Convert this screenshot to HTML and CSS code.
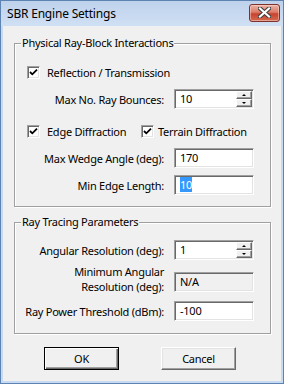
FILE: index.html
```html
<!DOCTYPE html>
<html>
<head>
  <meta name="viewport" content="width=device-width, initial-scale=1">
  <link rel="stylesheet" href="styles.css">
</head>
<body>

  <div class="window">
    <div class="titlebar">
      <span class="title">SBR Engine Settings</span>
      <span class="closeBtn">
        <svg width="13" height="11" viewBox="0 0 13 11">
          <path d="M2 1.5 L11 9.5 M11 1.5 L2 9.5" stroke="#3c3c3c" stroke-width="4.2" stroke-linecap="square" fill="none"/>
          <path d="M2 1.5 L11 9.5 M11 1.5 L2 9.5" stroke="#ffffff" stroke-width="2.2" stroke-linecap="square" fill="none"/>
        </svg>
      </span>
    </div>

    <div class="client">
      <fieldset class="group groupPhys">
        <legend>Physical Ray-Block Interactions</legend>

        <div class="checkRow rowRefl">
          <label class="check"><span class="box"><svg width="9" height="9" viewBox="0 0 9 9"><path d="M1 4 L3.3 6.3 L8 1.6" stroke="#000" stroke-width="1.8" fill="none"/></svg></span>Reflection / Transmission</label>
        </div>

        <div class="fieldRow rowBounces">
          <span class="lbl">Max No. Ray Bounces:</span>
          <div class="edit">
            <span class="val">10</span>
            <span class="spinner">
              <span class="spinBtn"><i class="arrowUp"></i></span>
              <span class="spinBtn"><i class="arrowDown"></i></span>
            </span>
          </div>
        </div>

        <div class="checkRow rowDiff">
          <label class="check checkEdge"><span class="box"><svg width="9" height="9" viewBox="0 0 9 9"><path d="M1 4 L3.3 6.3 L8 1.6" stroke="#000" stroke-width="1.8" fill="none"/></svg></span>Edge Diffraction</label>
          <label class="check checkTerrain"><span class="box"><svg width="9" height="9" viewBox="0 0 9 9"><path d="M1 4 L3.3 6.3 L8 1.6" stroke="#000" stroke-width="1.8" fill="none"/></svg></span>Terrain Diffraction</label>
        </div>

        <div class="fieldRow rowWedge">
          <span class="lbl">Max Wedge Angle (deg):</span>
          <div class="edit"><span class="val">170</span></div>
        </div>

        <div class="fieldRow rowEdgeLen">
          <span class="lbl">Min Edge Length:</span>
          <div class="edit"><span class="val"><span class="selected">10</span></span></div>
        </div>
      </fieldset>

      <fieldset class="group groupRay">
        <legend>Ray Tracing Parameters</legend>

        <div class="fieldRow rowAngular">
          <span class="lbl">Angular Resolution (deg):</span>
          <div class="edit">
            <span class="val">1</span>
            <span class="spinner">
              <span class="spinBtn"><i class="arrowUp"></i></span>
              <span class="spinBtn"><i class="arrowDown"></i></span>
            </span>
          </div>
        </div>

        <div class="fieldRow rowMinAng">
          <span class="lbl lblTwoLine">Minimum Angular<br>Resolution (deg):</span>
          <div class="edit disabled"><span class="val">N/A</span></div>
        </div>

        <div class="fieldRow rowPower">
          <span class="lbl">Ray Power Threshold (dBm):</span>
          <div class="edit"><span class="val">-100</span></div>
        </div>
      </fieldset>

      <div class="buttonRow">
        <button class="winButton defaultButton" type="button">OK</button>
        <button class="winButton" type="button">Cancel</button>
      </div>
    </div>
  </div>

</body>
</html>
```

FILE: styles.css
```css
html {
  background-color: #f0f0f0;
}

body {
  margin: 0;
  font-family: "Segoe UI", "Noto Sans", "Open Sans", sans-serif;
  font-size: 11px;
  letter-spacing: -0.25px;
  color: #000;
}

.window {
  width: 284px;
  height: 384px;
  box-sizing: border-box;
  border: 1px solid #5d83b3;
  padding: 0 2px 2px 2px;
  background: #c8daf1;
  display: flex;
  flex-direction: column;
}

.titlebar {
  flex-shrink: 0;
  height: 25px;
  display: flex;
  align-items: center;
  justify-content: space-between;
  background: linear-gradient(#bed2ec, #d0e0f4);
  margin: 0 -2px;
  padding: 0 3px 0 6px;
}

.title {
  font-size: 12px;
  letter-spacing: -0.2px;
}

.closeBtn {
  width: 31px;
  height: 18px;
  box-sizing: border-box;
  border: 1px solid #7b332b;
  border-radius: 3px;
  background: linear-gradient(#eab3a6 0%, #dc7c68 45%, #c9432f 55%, #d36a4f 100%);
  box-shadow: inset 0 0 0 1px rgba(255, 220, 210, 0.5);
  display: flex;
  align-items: center;
  justify-content: center;
  margin-top: -2px;
}

.client {
  flex: 1;
  min-height: 0;
  background: #f0f0f0;
  padding: 0 10px 0 11px;
}

/* group boxes */
.group {
  margin: 0;
  padding: 0;
  border: 1px solid #a0a0a0;
  box-shadow: inset 1px 1px 0 #fff, 1px 1px 0 #fff;
  width: 257px;
  box-sizing: border-box;
  min-inline-size: 0;
}

.group legend {
  padding: 0 1px;
  margin-left: 6px;
  line-height: 16px;
  background: #f0f0f0;
}

.groupPhys {
  margin-top: 9px;
  padding-top: 14px;
  padding-bottom: 11px;
}

.groupRay {
  margin-top: 7px;
  padding-top: 10px;
  padding-bottom: 12px;
}

/* check boxes */
.checkRow {
  height: 14px;
  display: flex;
  align-items: center;
  padding-left: 12px;
}

.check {
  display: flex;
  align-items: center;
}

.box {
  width: 13px;
  height: 13px;
  box-sizing: border-box;
  background: #fff;
  border-top: 1px solid #a0a0a0;
  border-left: 1px solid #a0a0a0;
  border-bottom: 1px solid #fff;
  border-right: 1px solid #fff;
  box-shadow: inset 1px 1px 0 #696969, inset -1px -1px 0 #e3e3e3;
  display: flex;
  align-items: center;
  justify-content: center;
  margin-right: 7px;
}

.checkEdge {
  width: 114px;
}

.checkTerrain .box {
  margin-right: 4px;
}

/* label + edit rows */
.fieldRow {
  display: flex;
  align-items: center;
}

.lbl {
  width: 149px;
  text-align: right;
  margin-right: 10px;
}

.lblTwoLine {
  line-height: 15px;
  margin-bottom: -2px;
}

.edit {
  position: relative;
  width: 80px;
  height: 20px;
  box-sizing: border-box;
  background: #fff;
  border-top: 1px solid #a0a0a0;
  border-left: 1px solid #a0a0a0;
  border-bottom: 1px solid #fff;
  border-right: 1px solid #fff;
  box-shadow: inset 1px 1px 0 #696969, inset -1px -1px 0 #e3e3e3;
  display: flex;
  align-items: center;
  padding-left: 5px;
}

.edit.disabled {
  background: #f0f0f0;
}

.val {
  line-height: 14px;
}

.selected {
  background: #3399ff;
  color: #fff;
}

.spinner {
  position: absolute;
  right: 1px;
  top: 1px;
  width: 16px;
  height: 16px;
  display: flex;
  flex-direction: column;
}

.spinBtn {
  flex: 1;
  box-sizing: border-box;
  background: #f0f0f0;
  border-top: 1px solid #fff;
  border-left: 1px solid #fff;
  border-bottom: 1px solid #696969;
  border-right: 1px solid #696969;
  box-shadow: inset -1px -1px 0 #a0a0a0;
  display: flex;
  align-items: center;
  justify-content: center;
}

.arrowUp, .arrowDown {
  width: 0;
  height: 0;
  border-left: 2px solid transparent;
  border-right: 2px solid transparent;
  margin-right: 1px;
}

.arrowUp {
  border-bottom: 2px solid #000;
}

.arrowDown {
  border-top: 2px solid #000;
}

.rowBounces { margin-top: 10px; }
.rowDiff { margin-top: 15px; }
.rowWedge { margin-top: 10px; }
.rowEdgeLen { margin-top: 7px; }

.rowMinAng {
  margin-top: 4px;
  align-items: flex-end;
}
.rowPower { margin-top: 9px; }

/* buttons */
.buttonRow {
  display: flex;
  gap: 42px;
  margin-top: 13px;
  padding-left: 30px;
}

.winButton {
  width: 75px;
  height: 23px;
  box-sizing: border-box;
  font-family: inherit;
  font-size: 11px;
  letter-spacing: -0.25px;
  color: #000;
  background: #f0f0f0;
  border-top: 1px solid #fff;
  border-left: 1px solid #fff;
  border-bottom: 1px solid #696969;
  border-right: 1px solid #696969;
  box-shadow: inset -1px -1px 0 #a0a0a0, inset 1px 1px 0 #e3e3e3;
  padding: 0;
}

.defaultButton {
  border: 1px solid #000;
  box-shadow: inset 1px 1px 0 #fff, inset -1px -1px 0 #696969, inset -2px -2px 0 #a0a0a0;
}
```
